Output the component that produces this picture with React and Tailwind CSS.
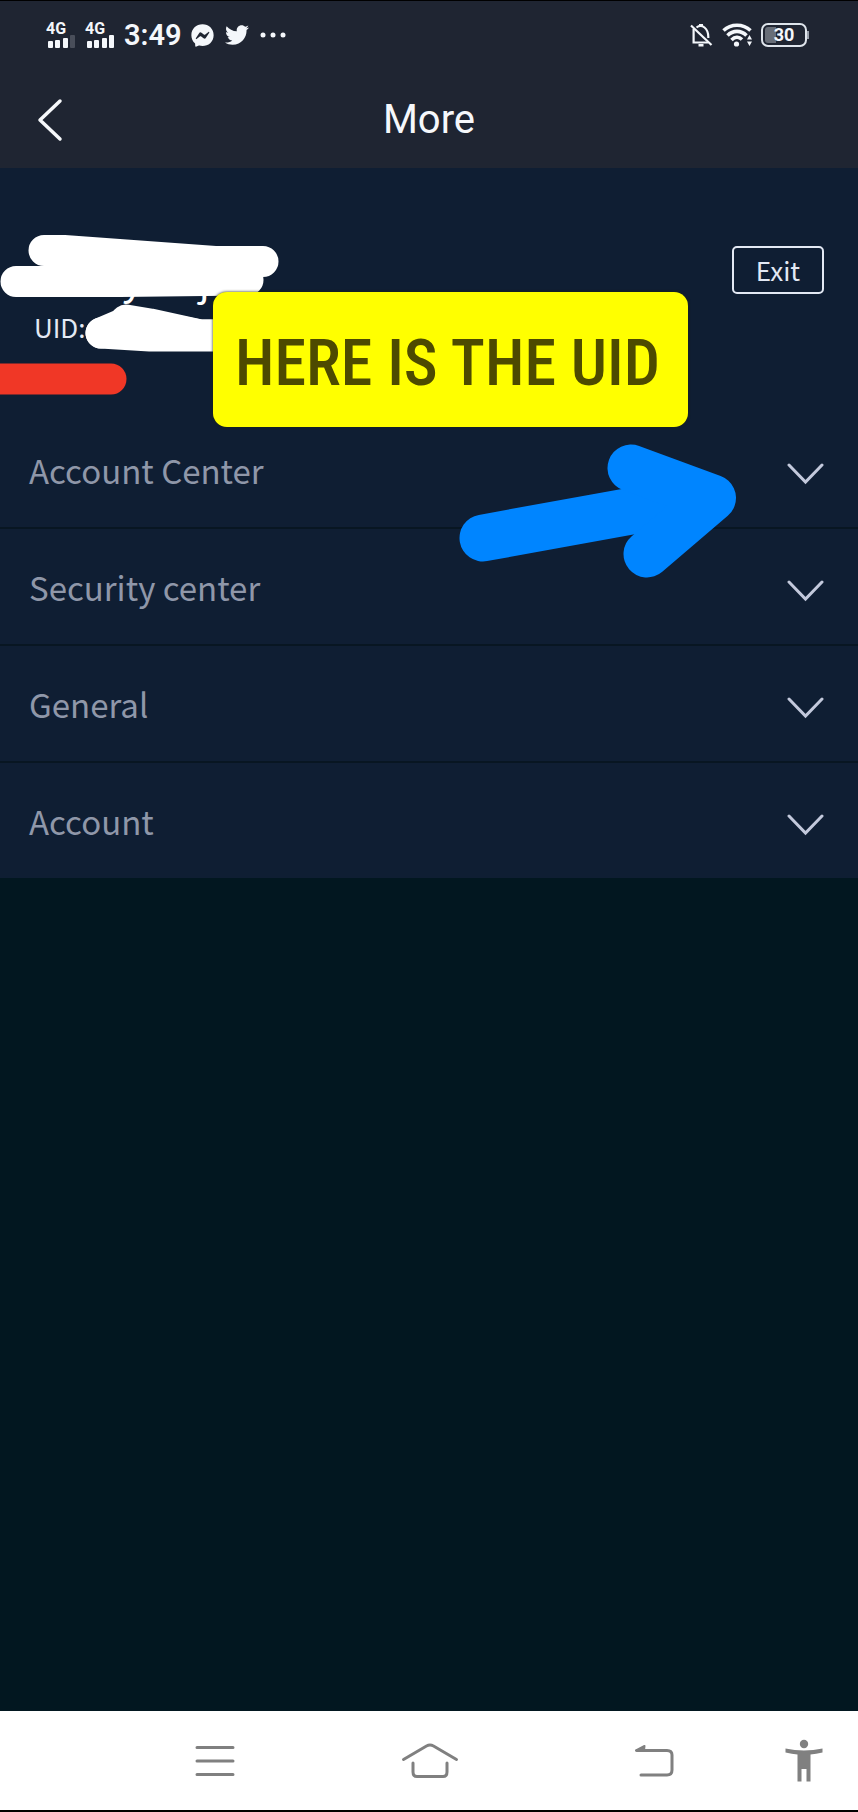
import React, { useState } from "react";
import { FaFacebookMessenger, FaTwitter } from "react-icons/fa";

const menuItems = ["Account Center", "Security center", "General", "Account"];

function Signal({ full }) {
  return (
    <div className="flex w-[30px] flex-col">
      <span className="text-[16px] font-bold leading-[12px]">4G</span>
      <svg viewBox="0 0 30 13" className="h-[13px] w-[30px]" fill="currentColor">
        <rect x="2" y="6" width="5" height="7" rx="1" />
        <rect x="9" y="5" width="5" height="8" rx="1" />
        <rect x="17" y="3" width="5" height="10" rx="1" />
        <rect
          x="24"
          y="0"
          width="5"
          height="13"
          rx="1"
          opacity={full ? 1 : 0.2}
        />
      </svg>
    </div>
  );
}

function BellOff() {
  return (
    <svg viewBox="0 0 24 24" className="h-6 w-6" fill="none" stroke="currentColor" strokeWidth="2.2">
      <path d="M2 2.500L22.500 22" />
      <path d="M4.600 6V19.500H19" />
      <path d="M7.500 4.500C10 2.500 13 2.500 15.500 4.500C18.500 7 19.500 10 19.300 15" />
      <path d="M10 2.200h4M9.500 22.300h5" strokeWidth="2.600" />
    </svg>
  );
}

function StatusBar() {
  return (
    <div className="flex h-[67px] items-center justify-between border-t border-black pl-[46px] pr-[49px] pt-[2px] font-['Roboto',sans-serif] text-[#f4f7fb]">
      <div className="flex items-center gap-[9px]">
        <Signal />
        <Signal full />
        <span className="text-[29px] font-semibold leading-8">3:49</span>
        <FaFacebookMessenger className="h-[23px] w-[23px]" />
        <FaTwitter className="ml-[2px] h-6 w-6" />
        <svg viewBox="0 0 26 6" className="ml-[2px] h-[6px] w-[26px]" fill="currentColor">
          <circle cx="3" cy="3" r="2.5" />
          <circle cx="13" cy="3" r="2.5" />
          <circle cx="23" cy="3" r="2.5" />
        </svg>
      </div>

      <div className="flex items-center gap-[9px]">
        <BellOff />
        <svg viewBox="0 0 30 24" className="h-6 w-[30px]" fill="none" stroke="currentColor" strokeWidth="3.6">
          <path d="M1.500 7.500C9 0.500 21 0.500 28.500 7.500" />
          <path d="M5.500 12.500C11 7 19 7 24.500 12.500" />
          <path d="M9.500 17C13 13.500 17 13.500 20 16.500" />
          <circle cx="14.500" cy="21" r="2.600" fill="currentColor" stroke="none" />
          <path
            d="M27.500 12l2.500 4.500h-5zM27.500 23l2.500-4.500h-5z"
            fill="currentColor"
            stroke="none"
          />
        </svg>
        <div className="flex items-center">
          <div className="flex h-6 w-[46px] items-center rounded-[7px] border-2 border-[#dfe5ec] p-[2px]">
            <div className="flex h-4 w-full items-center justify-center rounded-[3px] bg-linear-to-r from-[#686e78] from-30% to-transparent to-30%">
              <span className="text-[18px] font-bold leading-4">30</span>
            </div>
          </div>
          <div className="h-2 w-[2px] bg-[#9aa1ac]" />
        </div>
      </div>
    </div>
  );
}

function TitleBar() {
  return (
    <div className="grid h-[101px] grid-cols-[1fr_auto_1fr] items-center px-[37px] pt-1 text-[#f6f8fb]">
      <button aria-label="Back" className="justify-self-start">
        <svg viewBox="0 0 26 44" className="h-11 w-[26px]" fill="none" stroke="currentColor" strokeWidth="3.5" strokeLinecap="round" strokeLinejoin="round">
          <path d="M23 3L3 22l20 19" />
        </svg>
      </button>
      <h1 className="font-['Roboto',sans-serif] text-[40px] leading-[48px]">More</h1>
    </div>
  );
}

function Profile() {
  return (
    <section className="flex h-[244px] items-start justify-between pl-[34px] pr-[34px] pt-[78px] text-[#e3e9f4]">
      <div>
        <div className="flex h-[60px] items-end gap-[56px] pl-[88px] text-[40px] leading-[56px] text-white">
          <span>y</span>
          <span>j</span>
        </div>
        <p className="text-[26px] leading-[42px]">UID:</p>
      </div>
      <button className="h-12 w-[92px] rounded-[5px] border-2 border-[#e3e9f4] text-[26px] leading-[42px]">
        Exit
      </button>
    </section>
  );
}

function MenuRow({ label }) {
  const [open, setOpen] = useState(false);

  return (
    <li className="border-b-2 border-[#081622] last:border-b-0">
      <button
        aria-expanded={open}
        onClick={() => setOpen((cur) => !cur)}
        className="flex h-[115px] w-full items-center justify-between pl-[29px] pr-[34px] text-[#8f97a9]"
      >
        <span className="text-[33px] leading-[50px]">{label}</span>
        <svg viewBox="0 0 37 22" className="mt-2 h-[22px] w-[37px]" fill="none" stroke="#c3c9dc" strokeWidth="3" strokeLinecap="round">
          <path d="M2 2l16.500 17L35 2" />
        </svg>
      </button>
    </li>
  );
}

/* Marker strokes drawn over the name and the number */
function Scribbles() {
  return (
    <svg
      viewBox="0 0 290 240"
      className="pointer-events-none absolute left-0 top-0 h-[240px] w-[290px]"
      fill="none"
      strokeLinecap="round"
      strokeLinejoin="round"
      strokeWidth="31"
    >
      <g stroke="#fff">
        <path d="M44 82.500H64L215 93.500H263" />
        <path d="M16 113.500H120L248 112" />
        <path d="M60 98H240" />
        <path d="M101 165L128 153.500L200 167H240" strokeWidth="31" />
        <path d="M101 165L150 168H240" />
        <path d="M126 152L150 156L200 167H240" />
      </g>
      <path d="M-20 211H111" stroke="#f03726" />
    </svg>
  );
}

function Arrow() {
  return (
    <svg
      viewBox="0 0 280 136"
      className="pointer-events-none absolute right-[120px] top-[276px] h-[136px] w-[280px]"
      fill="#0085ff"
      stroke="#0085ff"
      strokeWidth="47"
      strokeLinecap="round"
      strokeLinejoin="round"
    >
      <path d="M25 94L240 55" />
      <path d="M173 24L254.500 54L189 110" fill="none" />
    </svg>
  );
}

function NavBar() {
  return (
    <nav className="grid h-[101px] grid-cols-[216fr_214fr_234fr_66fr] items-center justify-items-center border-b-2 border-black bg-white pl-[107px] pr-[21px] text-[#808080]">
      <button aria-label="Recent apps">
        <svg viewBox="0 0 40 32" className="h-8 w-10" fill="none" stroke="currentColor" strokeWidth="3" strokeLinecap="round">
          <path d="M2 2.500h36M2 16h36M2 29.500h36" />
        </svg>
      </button>
      <button aria-label="Home">
        <svg viewBox="0 0 58 38" className="h-[38px] w-[58px]" fill="none" stroke="currentColor" strokeWidth="3" strokeLinecap="round" strokeLinejoin="round">
          <path d="M2.500 17.500L25.500 4Q29 2.200 32.500 4L55.500 17.500" />
          <path d="M12 21V30Q12 34.500 16 34.500H42Q46 34.500 46 30V21" />
        </svg>
      </button>
      <button aria-label="Return">
        <svg viewBox="0 0 42 34" className="h-[34px] w-[42px]" fill="none" stroke="currentColor" strokeWidth="3" strokeLinecap="round" strokeLinejoin="round">
          <path d="M4 6.500H34Q39 6.500 39 11V26Q39 31 34 31H8" />
          <path d="M11.500 2L3 6.500H11Z" fill="currentColor" strokeWidth="2" />
        </svg>
      </button>
      <button aria-label="Accessibility">
        <svg viewBox="0 0 38 44" className="h-11 w-[38px]" fill="currentColor">
          <circle cx="19" cy="5" r="4.200" />
          <path d="M0.500 9.500Q19 13.500 37.500 9.500V13.500Q31 15 25.500 15.500V42.500H21.500V30H16.500V42.500H12.500V15.500Q7 15 0.500 13.500Z" />
        </svg>
      </button>
    </nav>
  );
}

export default function App() {
  return (
    <div className="flex min-h-screen flex-col bg-[#021720] font-['Noto_Sans_CJK_SC',sans-serif]">
      <header className="bg-[#1f2532]">
        <StatusBar />
        <TitleBar />
      </header>

      <main className="relative flex-1">
        <div className="bg-[#0f1e33]">
          <Profile />
          <ul>
            {menuItems.map((item) => (
              <MenuRow key={item} label={item} />
            ))}
          </ul>
        </div>

        <Scribbles />
        <Arrow />
        <div className="absolute left-[213px] top-[124px] flex h-[135px] w-[475px] items-center rounded-[14px] bg-[#ffff00] pl-[22px] pt-2 shadow-[0_0_3px_#1c2410]">
          <p className="whitespace-nowrap font-['Roboto_Condensed','Liberation_Sans_Narrow',sans-serif] text-[64px] font-medium leading-[72px] text-[#4d4a00]">
            HERE IS THE UID
          </p>
        </div>
      </main>

      <NavBar />
    </div>
  );
}
